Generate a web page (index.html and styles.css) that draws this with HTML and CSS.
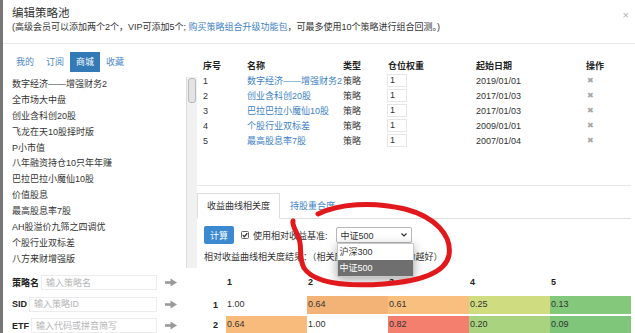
FILE: index.html
```html
<!DOCTYPE html>
<html>
	<head>
		<meta charset="UTF-8">
		<title>编辑策略池</title>
		<link rel="stylesheet" href="styles.css">
	</head>
	<body>
	<div class="modal">

	    <div class="modal-head">
	        <div>
	            <h1 class="title">编辑策略池</h1>
	            <p class="sub">(高级会员可以添加两个2个，VIP可添加5个; <a href="#">购买策略组合升级功能包</a>，可最多使用10个策略进行组合回测。)</p>
	        </div>
	        <span class="close">×</span>
	    </div>

	    <div class="modal-body">
	        <!--左侧策略池-->
	        <div class="side">
	            <div class="tabs">
	                <a href="#">我的</a>
	                <a href="#">订阅</a>
	                <a class="on" href="#">商城</a>
	                <a href="#">收藏</a>
	            </div>
	            <div class="pool">
	                <ul class="pool-list">
	                    <li>数字经济——增强财务2</li>
	                    <li>全市场大中盘</li>
	                    <li>创业含科创20股</li>
	                    <li>飞龙在天10股择时版</li>
	                    <li>P小市值</li>
	                    <li>八年融资持仓10只年年赚</li>
	                    <li>巴拉巴拉小魔仙10股</li>
	                    <li>价值股息</li>
	                    <li>最高股息率7股</li>
	                    <li>AH股溢价九筛之四调优</li>
	                    <li>个股行业双标差</li>
	                    <li>八方来财增强版</li>
	                </ul>
	                <div class="scroll"><div class="thumb"></div></div>
	            </div>
	            <div class="finder">
	                <div class="find-row">
	                    <b>策略名</b>
	                    <input type="text" placeholder="输入策略名">
	                    <svg class="go" width="12" height="9" viewBox="0 0 12 9"><path d="M0 4.5h7" stroke="#9a9a9a" stroke-width="2.6"/><path d="M5.5 0.5L12 4.5 5.5 8.5z" fill="#9a9a9a"/></svg>
	                </div>
	                <div class="find-row">
	                    <b>SID</b>
	                    <input type="text" placeholder="输入策略ID">
	                    <svg class="go" width="12" height="9" viewBox="0 0 12 9"><path d="M0 4.5h7" stroke="#9a9a9a" stroke-width="2.6"/><path d="M5.5 0.5L12 4.5 5.5 8.5z" fill="#9a9a9a"/></svg>
	                </div>
	                <div class="find-row">
	                    <b>ETF</b>
	                    <input type="text" placeholder="输入代码或拼音简写">
	                    <svg class="go" width="12" height="9" viewBox="0 0 12 9"><path d="M0 4.5h7" stroke="#9a9a9a" stroke-width="2.6"/><path d="M5.5 0.5L12 4.5 5.5 8.5z" fill="#9a9a9a"/></svg>
	                </div>
	            </div>
	        </div>

	        <!--右侧已选策略-->
	        <div class="main">
	            <div class="picked">
	                <div class="prow head">
	                    <span>序号</span><span>名称</span><span>类型</span><span>仓位权重</span><span>起始日期</span><span>操作</span>
	                </div>
	                <div class="prow">
	                    <span>1</span><a href="#">数字经济——增强财务2</a><span>策略</span><span class="weight">1</span><span>2019/01/01</span><span class="del">✖</span>
	                </div>
	                <div class="prow">
	                    <span>2</span><a href="#">创业含科创20股</a><span>策略</span><span class="weight">1</span><span>2017/01/03</span><span class="del">✖</span>
	                </div>
	                <div class="prow">
	                    <span>3</span><a href="#">巴拉巴拉小魔仙10股</a><span>策略</span><span class="weight">1</span><span>2017/01/03</span><span class="del">✖</span>
	                </div>
	                <div class="prow">
	                    <span>4</span><a href="#">个股行业双标差</a><span>策略</span><span class="weight">1</span><span>2009/01/01</span><span class="del">✖</span>
	                </div>
	                <div class="prow">
	                    <span>5</span><a href="#">最高股息率7股</a><span>策略</span><span class="weight">1</span><span>2007/01/04</span><span class="del">✖</span>
	                </div>
	            </div>

	            <div class="tabbar">
	                <a class="tab on" href="#">收益曲线相关度</a>
	                <a class="tab" href="#">持股重合度</a>
	            </div>

	            <div class="tools">
	                <button class="btn">计算</button>
	                <svg class="check" width="8" height="8" viewBox="0 0 8 8"><rect x="0.5" y="0.5" width="7" height="7" rx="1" fill="#fff" stroke="#666"/><path d="M1.8 4.1l1.5 1.6 3-3.4" fill="none" stroke="#333" stroke-width="1.3"/></svg>
	                <span class="label">使用相对收益基准:</span>
	                <div class="select">
	                    <span>中证500</span>
	                    <svg width="6" height="4" viewBox="0 0 6 4"><path d="M0.5 0.5L3 3 5.5 0.5" fill="none" stroke="#333" stroke-width="1.2"/></svg>
	                    <div class="drop">
	                        <div class="opt">沪深300</div>
	                        <div class="opt sel">中证500</div>
	                    </div>
	                </div>
	            </div>

	            <p class="result">相对收益曲线相关度结果：（相关度越低，抗风险能力越好）</p>

	            <div class="matrix">
	                <span></span><span class="mh">1</span><span class="mh">2</span><span class="mh">3</span><span class="mh">4</span><span class="mh">5</span>
	                <b>1</b><span class="v">1.00</span><span class="v o1">0.64</span><span class="v o2">0.61</span><span class="v g1">0.25</span><span class="v g3">0.13</span>
	                <b>2</b><span class="v o3">0.64</span><span class="v">1.00</span><span class="v r1">0.82</span><span class="v g2">0.20</span><span class="v g4">0.09</span>
	            </div>
	        </div>
	    </div>
	</div>

	<!--红色手绘圈-->
	<svg class="mark" width="635" height="333" viewBox="0 0 635 333">
	    <path d="M318 214 C338 204, 372 201, 405 209 C436 217, 452 236, 449 255 C446 271, 424 281, 384 284 C342 287, 313 282, 304 268 C298 257, 303 246, 298 236 C295 229, 292 225, 293 221" fill="none" stroke="#e2191c" stroke-width="5" stroke-linecap="round"/>
	</svg>
	</body>
</html>
```

FILE: styles.css
```css
body{
    margin:0;
    height:333px;
    overflow:hidden;
    position:relative;
    background-color:#777;
    font-family:"Liberation Sans","Noto Sans CJK SC",sans-serif;
    font-size:9px;
    color:#333;
}
a{
    text-decoration:none;
}
.modal{
    margin-left:3px;
    height:333px;
    background-color:#fff;
    overflow:hidden;
}
.modal-head{
    display:flex;
    justify-content:space-between;
    padding:6px 6px 10px 9px;
    border-bottom:1px solid #e8e8e8;
}
.title{
    margin:0;
    font-size:11.5px;
    font-weight:normal;
    line-height:14px;
}
.sub{
    margin:1px 0 0;
    line-height:12px;
}
.sub a{
    color:#3d7fc4;
}
.close{
    color:#b4b4b4;
    font-size:11px;
    line-height:10px;
    margin-top:4px;
}
.modal-body{
    display:flex;
}

/*左侧*/
.side{
    width:194px;
    padding-top:8px;
}
.tabs{
    display:flex;
    height:20px;
    padding-left:7px;
}
.tabs a{
    padding:0 6px;
    line-height:20px;
    color:#4f8ac6;
}
.tabs a.on{
    background-color:#337ab7;
    color:#fff;
}
.pool{
    display:flex;
    height:191px;
    margin-top:5px;
}
.pool-list{
    flex:1;
    list-style:none;
    margin:0;
    padding:0 0 0 9px;
    overflow:hidden;
}
.pool-list li{
    height:15.9px;
    line-height:15.9px;
    white-space:nowrap;
}
.scroll{
    width:10px;
    background-color:#f1f1f1;
    border-left:1px solid #dcdcdc;
    padding-top:1px;
}
.thumb{
    height:23px;
    margin:0 1px;
    border:1px solid #b9b9b9;
    border-radius:3px;
    background-color:#e4e4e4;
}
.finder{
    padding:4px 20px 0 9px;
}
.find-row{
    display:flex;
    align-items:center;
    height:21.5px;
}
.find-row b{
    font-weight:bold;
    color:#222;
}
.find-row input{
    flex:1;
    min-width:0;
    height:15px;
    margin-left:2px;
    padding:0 4px;
    box-sizing:border-box;
    border:1px solid #ececec;
    font:inherit;
    color:#333;
}
.find-row input::placeholder{
    color:#b5b5b5;
}
.go{
    margin-left:8px;
}

/*右侧*/
.main{
    flex:1;
    padding:14px 4px 0 0;
}
.picked{
    height:127px;
    padding-left:6px;
    border-bottom:1px solid #e8e8e8;
}
.prow{
    display:grid;
    grid-template-columns:44px 96px 45px 88px 110px 1fr;
    align-items:center;
    height:15px;
    white-space:nowrap;
}
.prow.head{
    font-weight:bold;
    color:#222;
}
.prow a{
    color:#3d7fc4;
}
.weight{
    width:20px;
    height:13px;
    margin-left:-1px;
    padding-left:2px;
    box-sizing:border-box;
    border:1px solid #e6e6e6;
    line-height:11px;
}
.del{
    color:#a8a8a8;
    font-size:8px;
    padding-left:1px;
}
.tabbar{
    display:flex;
    align-items:flex-start;
    height:25px;
    margin-top:7px;
    border-bottom:1px solid #ddd;
}
.tab{
    padding:0 9px;
    line-height:24px;
    border:1px solid transparent;
    color:#3d7fc4;
}
.tab.on{
    border-color:#ddd;
    border-bottom-color:#fff;
    background-color:#fff;
    color:#333;
    margin-bottom:-1px;
}
.tools{
    display:flex;
    align-items:center;
    height:18px;
    padding:7px 0 0 7px;
}
.btn{
    width:30px;
    height:18px;
    padding:0;
    border:0;
    border-radius:2px;
    background-color:#3b8ad0;
    color:#fff;
    font:inherit;
}
.check{
    margin-left:7px;
}
.label{
    margin-left:4px;
}
.select{
    position:relative;
    display:flex;
    align-items:center;
    justify-content:space-between;
    width:76px;
    height:16px;
    margin-left:8px;
    padding:0 4px;
    box-sizing:border-box;
    border:1px solid #b8b8b8;
    border-radius:2px;
}
.drop{
    position:absolute;
    top:15px;
    left:0;
    width:75px;
    border:1px solid #c8c8c8;
    background-color:#fff;
    box-shadow:0 3px 10px rgba(0,0,0,.35);
}
.opt{
    height:16px;
    line-height:16px;
    padding-left:2px;
}
.opt.sel{
    background-color:#6f6f6f;
    color:#fff;
}
.result{
    margin:6px 0 0 7px;
    line-height:14px;
}
.matrix{
    display:grid;
    grid-template-columns:22px repeat(5,81px);
    grid-template-rows:20px 18px 18px;
    row-gap:2px;
    margin:10px 0 0 7px;
}
.matrix b{
    padding-left:9px;
    line-height:18px;
    color:#222;
}
.mh{
    padding-left:1px;
    line-height:16px;
    font-weight:bold;
    color:#222;
}
.v{
    padding-left:1px;
    line-height:17px;
}
.o1{ background-color:#f3b377; }
.o2{ background-color:#f9bf7e; }
.o3{ background-color:#f9bb7b; }
.r1{ background-color:#f47f6f; }
.g1{ background-color:#cfdc80; }
.g2{ background-color:#a9d37e; }
.g3{ background-color:#84c87b; }
.g4{ background-color:#7fc57a; }

.mark{
    position:absolute;
    left:0;
    top:0;
}
```
